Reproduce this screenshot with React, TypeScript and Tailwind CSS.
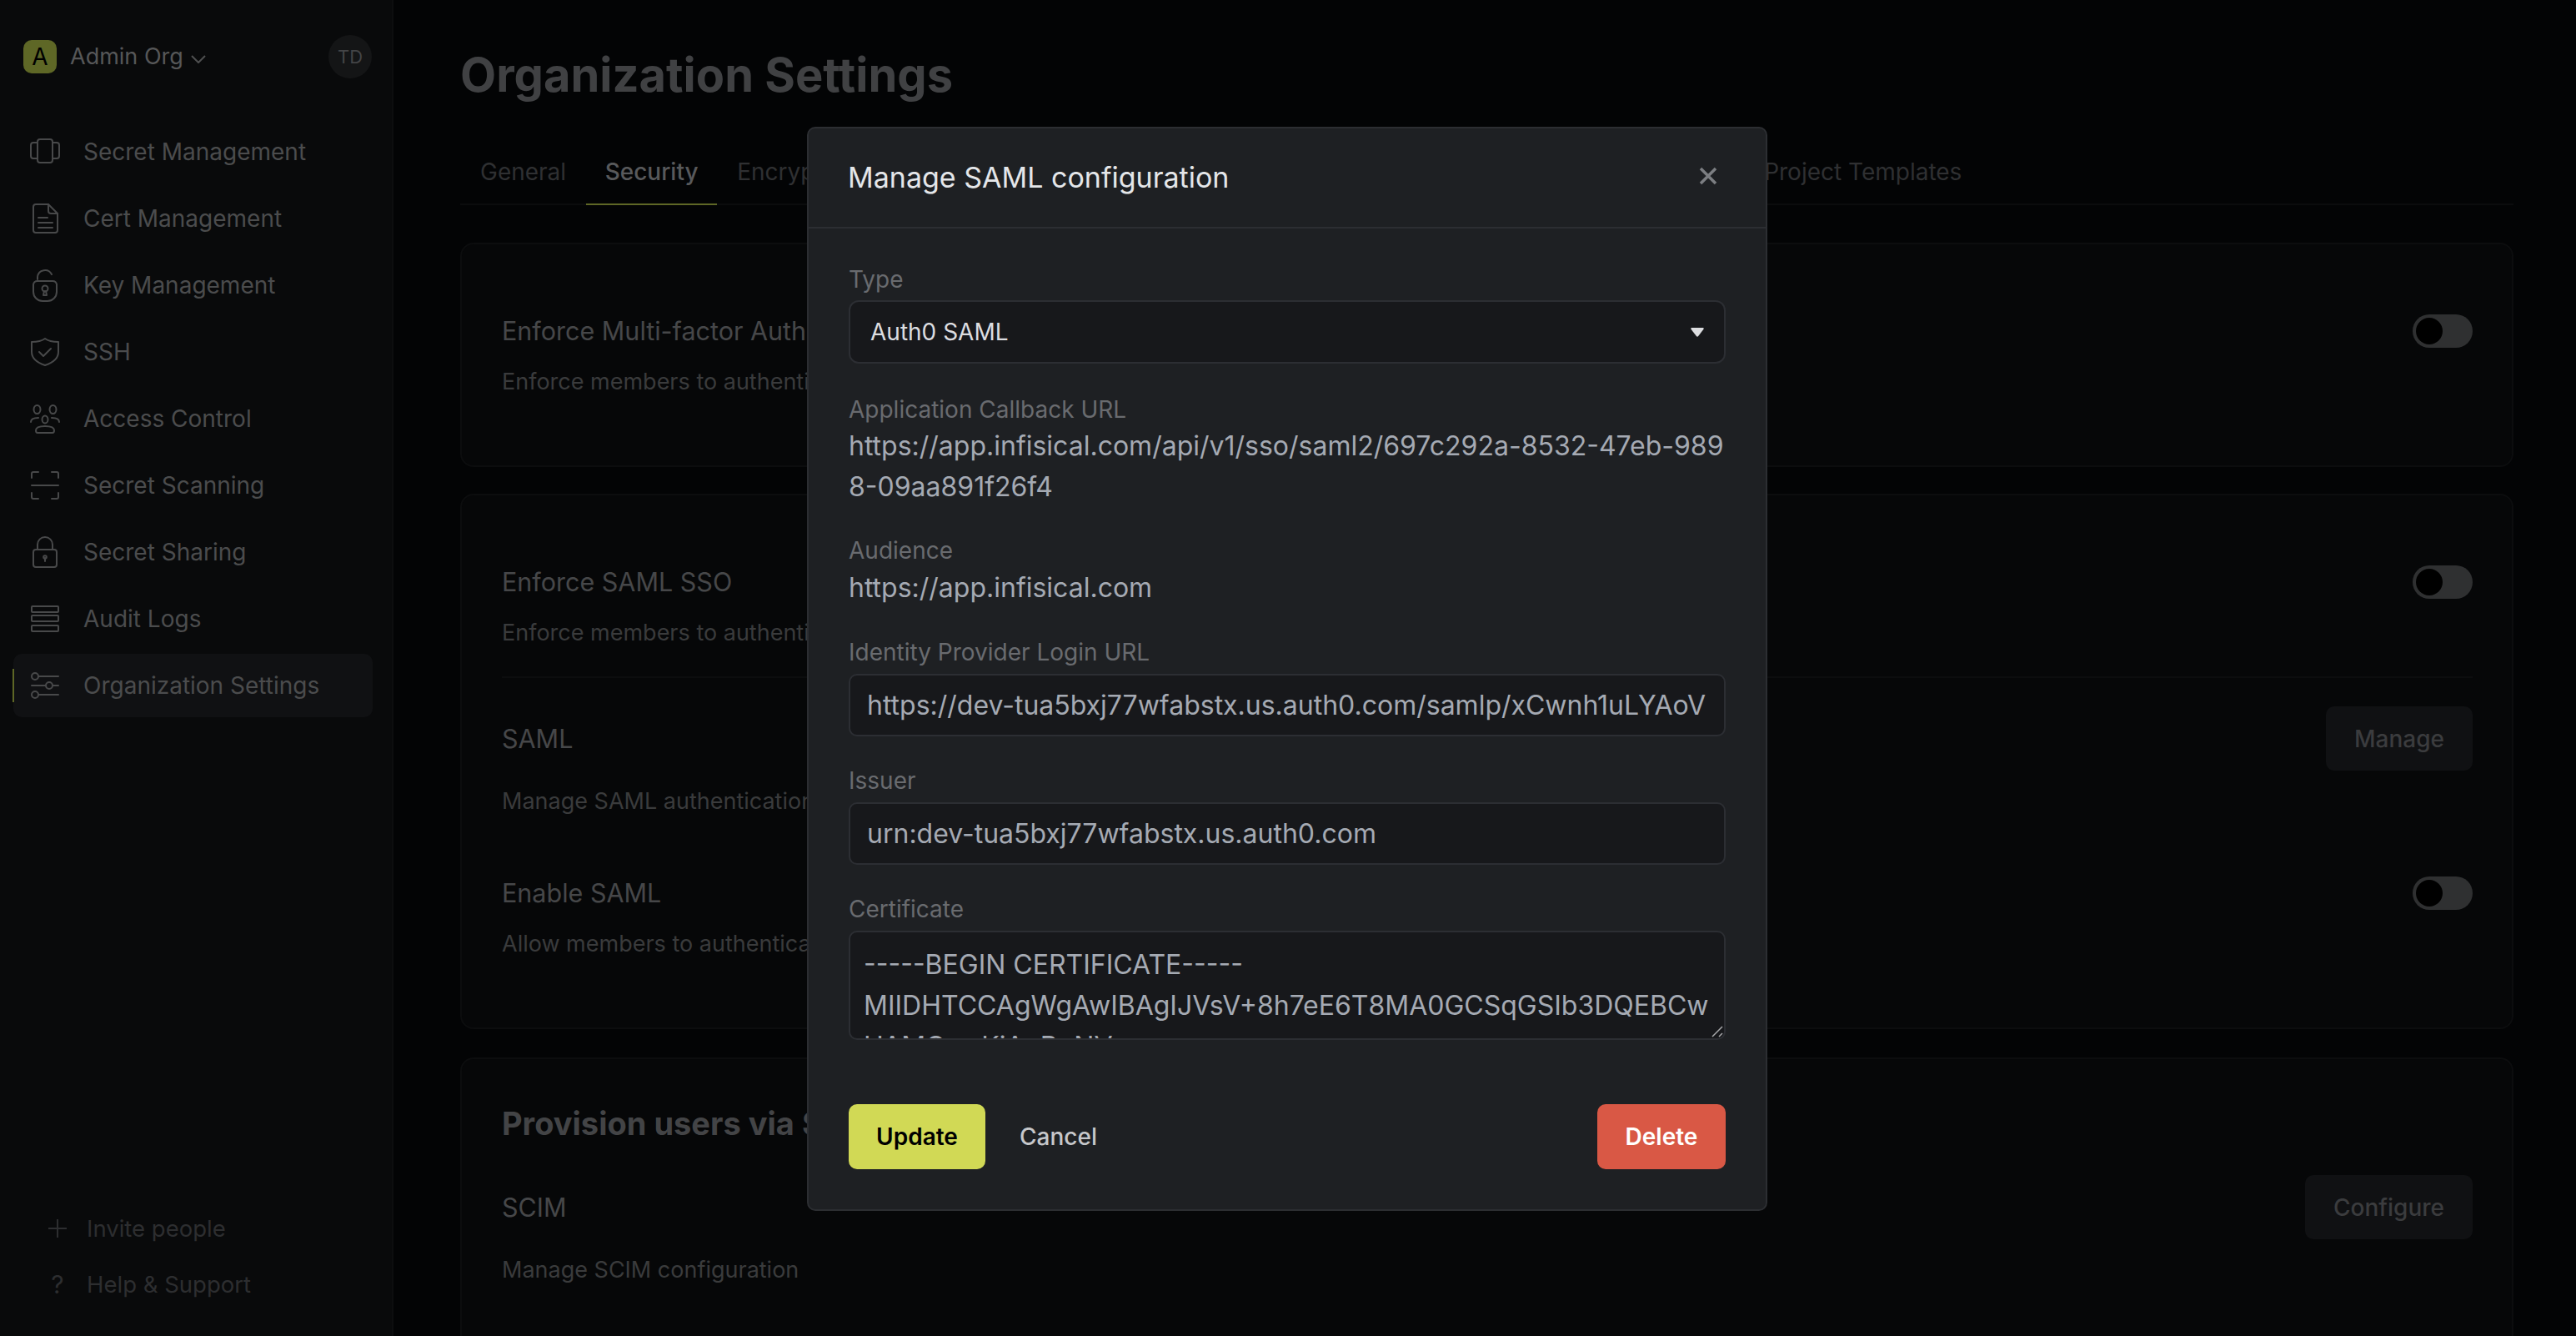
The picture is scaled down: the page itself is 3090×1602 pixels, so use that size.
import { ReactNode } from "react";

const iconClass = "h-[36px] w-[36px] shrink-0 fill-none stroke-[#48494a] stroke-2";

const navItems: { label: string; icon: ReactNode; active?: boolean }[] = [
  {
    label: "Secret Management",
    icon: (
      <svg viewBox="0 0 36 36" className={iconClass} strokeLinejoin="round">
        <rect x="9" y="3" width="18" height="28" rx="3" />
        <path d="M9 7H4a3 3 0 0 0-3 3v13a3 3 0 0 0 3 3h5M27 7h5a3 3 0 0 1 3 3v13a3 3 0 0 1-3 3h-5" />
      </svg>
    ),
  },
  {
    label: "Cert Management",
    icon: (
      <svg viewBox="0 0 36 36" className={iconClass} strokeLinejoin="round" strokeLinecap="round">
        <path d="M7 1h15l11 11v20a3 3 0 0 1-3 3H7a3 3 0 0 1-3-3V4a3 3 0 0 1 3-3z" />
        <path d="M22 1v8a3 3 0 0 0 3 3h8M10 17h11M10 23h17M10 29h17" />
      </svg>
    ),
  },
  {
    label: "Key Management",
    icon: (
      <svg viewBox="0 0 36 40" className={iconClass + " h-[40px]"} strokeLinejoin="round" strokeLinecap="round">
        <path d="M9 13V10a9 9 0 0 1 17-3" />
        <path d="M4 19a5 5 0 0 1 5-4h18a5 5 0 0 1 5 4v9a11 11 0 0 1-11 11h-6A11 11 0 0 1 4 28z" />
        <circle cx="18" cy="24" r="3.5" />
        <path d="M17 27l-1 5h4l-1-5" />
      </svg>
    ),
  },
  {
    label: "SSH",
    icon: (
      <svg viewBox="0 0 36 36" className={iconClass} strokeLinejoin="round" strokeLinecap="round">
        <path d="M18 2c4 3 10 4 16 4v12c0 8-7 13-16 16C9 31 2 26 2 18V6c6 0 12-1 16-4z" />
        <path d="M11 18l5 5 9-9" />
      </svg>
    ),
  },
  {
    label: "Access Control",
    icon: (
      <svg viewBox="0 0 36 36" className={iconClass} strokeLinejoin="round" strokeLinecap="round">
        <ellipse cx="8.5" cy="7" rx="4" ry="5" />
        <ellipse cx="27.5" cy="7" rx="4" ry="5" />
        <ellipse cx="18" cy="19" rx="3.5" ry="4.5" />
        <path d="M1 22c0-3 3-5 9-5M35 22c0-3-3-5-9-5" />
        <path d="M7 32c0-3 4-5 11-5s11 2 11 5c0 2-1 3-2 3H9c-1 0-2-1-2-3z" />
      </svg>
    ),
  },
  {
    label: "Secret Scanning",
    icon: (
      <svg viewBox="0 0 36 36" className={iconClass} strokeLinejoin="round" strokeLinecap="round">
        <path d="M2 9V4a2 2 0 0 1 2-2h6M26 2h6a2 2 0 0 1 2 2v5M2 27v5a2 2 0 0 0 2 2h6M26 34h6a2 2 0 0 0 2-2v-5M2 18h32" />
      </svg>
    ),
  },
  {
    label: "Secret Sharing",
    icon: (
      <svg viewBox="0 0 36 40" className={iconClass + " h-[40px]"} strokeLinejoin="round" strokeLinecap="round">
        <path d="M9 17V11a9 9 0 0 1 18 0v6" />
        <rect x="4" y="17" width="28" height="21" rx="3" />
        <circle cx="18" cy="26" r="1.8" />
        <path d="M18 27v4" />
      </svg>
    ),
  },
  {
    label: "Audit Logs",
    icon: (
      <svg viewBox="0 0 36 36" className={iconClass} strokeLinejoin="round">
        <rect x="2" y="3" width="32" height="7" rx="1" />
        <rect x="2" y="14" width="32" height="7" rx="1" />
        <rect x="2" y="26" width="32" height="7" rx="1" />
      </svg>
    ),
  },
  {
    label: "Organization Settings",
    active: true,
    icon: (
      <svg viewBox="0 0 36 36" className={iconClass} strokeLinecap="round">
        <circle cx="6" cy="7" r="4" />
        <circle cx="23" cy="18" r="4" />
        <circle cx="6" cy="29" r="4" />
        <path d="M10 7h24M2 18h17M27 18h7M10 29h24" />
      </svg>
    ),
  },
];

function Toggle() {
  return (
    <div className="flex h-[40px] w-[72px] items-center rounded-full bg-[#2f3031] pl-[4px]">
      <div className="h-[32px] w-[32px] rounded-full bg-black" />
    </div>
  );
}

function Title({ children }: { children: ReactNode }) {
  return <div className="text-[30.5px] leading-[48px] text-[#464749]">{children}</div>;
}

function Desc({ children }: { children: ReactNode }) {
  return <div className="mt-[17px] whitespace-nowrap text-[27px] leading-[40px] text-[#3a3b3c]">{children}</div>;
}

function Label({ children }: { children: ReactNode }) {
  return <div className="text-[28px] leading-[40px] text-[#696b6f]">{children}</div>;
}

function TextInput({ value }: { value: string }) {
  return (
    <input
      readOnly
      value={value}
      className="mt-[6px] h-[75px] w-full rounded-[10px] border-2 border-[#2c2e33] bg-[#17181b] px-[20px] text-[32px] text-[#a5aab3] outline-none"
    />
  );
}

export default function App() {
  return (
    <div className="relative flex h-[1602px] w-[3090px] overflow-hidden bg-[#030405] font-['Inter',sans-serif]">
      {/* sidebar */}
      <aside className="flex w-[472px] shrink-0 flex-col border-r-2 border-[#0d0e0f] bg-[#090a0b] pl-[16px] pr-[23px]">
        <div className="flex h-[144px] items-start pl-[12px] pr-[1px] pt-[42px]">
          <div className="mt-[6px] flex h-[40px] w-[40px] items-center justify-center rounded-[10px] bg-[#5e6726] text-[28px] leading-none text-black">
            A
          </div>
          <span className="ml-[16px] mt-[6px] text-[27px] leading-[40px] text-[#565758]">Admin Org</span>
          <svg viewBox="0 0 18 10" className="ml-[9px] mt-[24px] h-[10px] w-[18px] fill-none stroke-[#4f5051] stroke-2">
            <path d="M1 1l8 8 8-8" />
          </svg>
          <div className="ml-auto flex h-[52px] w-[52px] items-center justify-center rounded-full bg-[#141516] text-[22px] text-[#434446]">
            TD
          </div>
        </div>
        <nav className="flex flex-col gap-[4px]">
          {navItems.map((item) => (
            <div
              key={item.label}
              className={
                item.active
                  ? "relative flex h-[76px] items-center gap-[28px] rounded-[10px] bg-[#101113] pl-[20px]"
                  : "flex h-[76px] items-center gap-[28px] pl-[20px]"
              }
            >
              {item.active && <div className="absolute left-[-1px] h-[40px] w-[2px] bg-[#5e6726]" />}
              {item.icon}
              <span className="text-[28px] text-[#4b4c4d]">{item.label}</span>
            </div>
          ))}
        </nav>
        <div className="mt-auto flex flex-col gap-[27px] pb-[42px] pl-[41px] text-[27.5px] leading-[40px] text-[#2d2e30]">
          <div className="flex items-center">
            <svg viewBox="0 0 24 24" className="h-[24px] w-[24px] fill-none stroke-[#2d2e30] stroke-2">
              <path d="M12 1v22M1 12h22" />
            </svg>
            <span className="ml-[23px]">Invite people</span>
          </div>
          <div className="flex items-center">
            <span className="w-[24px] text-center text-[30px]">?</span>
            <span className="ml-[23px]">Help &amp; Support</span>
          </div>
        </div>
      </aside>

      {/* page behind the modal */}
      <main className="min-w-0 flex-1 pl-[80px] pr-[75px] pt-[54px]">
        <h1 className="text-[56px] font-bold leading-[72px] text-[#404143]">Organization Settings</h1>
        <div className="mt-[40px] flex h-[80px] border-b-2 border-[#0b0c0d] pt-[1px] text-[28px] text-[#2f3032]">
          <div className="flex items-center px-[24px]">General</div>
          <div className="relative flex w-[157px] items-center justify-center font-medium text-[#58595b]">
            Security
            <div className="absolute inset-x-0 bottom-[-2px] h-[2px] bg-[#5e6726]" />
          </div>
          <div className="flex items-center px-[24px]">Encryption</div>
          <div className="flex items-center px-[24px]">Workflow Integrations</div>
          <div className="flex items-center px-[24px]">Audit Log Streams</div>
          <div className="flex items-center px-[24px]">External Migrations</div>
          <div className="flex items-center px-[24px]">KMIP</div>
          <div className="ml-[-9px] flex items-center whitespace-nowrap px-[24px]">Project Templates</div>
        </div>

        <section className="mt-[45px] rounded-[16px] border-2 border-[#0c0d0e] bg-[#060708] pb-[48px] pl-[48px] pr-[47px] pt-[48px]">
          <div className="flex items-center justify-between pt-[32px]">
            <Title>Enforce Multi-factor Authentication</Title>
            <Toggle />
          </div>
          <Desc>Enforce members to authenticate with MFA to access this organization</Desc>
          <div className="h-[32px]" />
        </section>

        <section className="mt-[32px] rounded-[16px] border-2 border-[#0c0d0e] bg-[#060708] pl-[48px] pr-[47px] pt-[48px]">
          <div className="flex items-center justify-between pt-[32px]">
            <Title>Enforce SAML SSO</Title>
            <Toggle />
          </div>
          <Desc>Enforce members to authenticate via SAML to access this organization</Desc>
          <div className="mt-[32px] h-[2px] bg-[#0c0d0e]" />
          <div className="mt-[34px] flex items-center justify-between">
            <Title>SAML</Title>
            <div className="flex h-[77px] w-[176px] items-center justify-center rounded-[10px] bg-[#101113] text-[28px] font-medium text-[#3b3c3e]">
              Manage
            </div>
          </div>
          <Desc>Manage SAML authentication configuration</Desc>
          <div className="mt-[66px] flex items-center justify-between">
            <Title>Enable SAML</Title>
            <Toggle />
          </div>
          <Desc>Allow members to authenticate into Infisical with SAML</Desc>
          <div className="h-[80px]" />
        </section>

        <section className="mt-[34px] rounded-[16px] border-2 border-[#0c0d0e] bg-[#060708] pb-[200px] pl-[48px] pr-[47px] pt-[48px]">
          <div className="mt-[-1px] text-[38px] font-bold leading-[60px] text-[#434446]">Provision users via SCIM</div>
          <div className="mt-[32px] flex items-center justify-between">
            <Title>SCIM</Title>
            <div className="flex h-[77px] w-[201px] items-center justify-center rounded-[10px] bg-[#101113] text-[28px] font-medium text-[#3b3c3e]">
              Configure
            </div>
          </div>
          <Desc>Manage SCIM configuration</Desc>
        </section>
      </main>

      {/* modal */}
      <div className="absolute inset-0 flex items-start justify-center pr-[2px] pt-[152px]">
        <div className="w-[1152px] rounded-[10px] border-2 border-[#2c2e32] bg-[#1e2023]">
          <div className="flex h-[120px] items-center justify-between border-b-2 border-[#2c2e32] pb-[2px] pl-[47px] pr-[58px]">
            <h2 className="text-[34px] text-[#e4e6e9]">Manage SAML configuration</h2>
            <svg viewBox="0 0 22 22" className="mt-[-2px] h-[22px] w-[22px] fill-none stroke-[#7c7e82] stroke-[3.5]">
              <path d="M2 2l18 18M20 2L2 20" />
            </svg>
          </div>
          <div className="px-[48px] pb-[48px] pt-[41px]">
            <Label>Type</Label>
            <div className="mt-[5px] flex h-[76px] items-center justify-between rounded-[12px] border-2 border-[#2c2e33] bg-[#17181b] pl-[24px] pr-[24px]">
              <span className="text-[28px] text-[#dcdde0]">Auth0 SAML</span>
              <svg viewBox="0 0 16 11" className="h-[11px] w-[16px] fill-[#dcdde0]">
                <path d="M1.5 0h13c1 0 1.6 1 1 1.8L9 10.2c-.5.6-1.5.6-2 0L.5 1.8C-.1 1 .5 0 1.5 0z" />
              </svg>
            </div>

            <div className="mt-[35px]">
              <Label>Application Callback URL</Label>
            </div>
            <div className="mt-[-1px] text-[32px] leading-[49px] text-[#a5aab3]">
              <div className="whitespace-nowrap">https://app.infisical.com/api/v1/sso/saml2/697c292a-8532-47eb-989</div>
              <div>8-09aa891f26f4</div>
            </div>

            <div className="mt-[32px]">
              <Label>Audience</Label>
            </div>
            <div className="text-[32px] leading-[50px] text-[#a5aab3]">https://app.infisical.com</div>

            <div className="mt-[32px]">
              <Label>Identity Provider Login URL</Label>
            </div>
            <TextInput value="https://dev-tua5bxj77wfabstx.us.auth0.com/samlp/xCwnh1uLYAoVmWRvFmQwZt5QnTn3nGqP" />

            <div className="mt-[33px]">
              <Label>Issuer</Label>
            </div>
            <TextInput value="urn:dev-tua5bxj77wfabstx.us.auth0.com" />

            <div className="mt-[33px]">
              <Label>Certificate</Label>
            </div>
            <div className="relative mt-[6px]">
              <textarea
                readOnly
                wrap="off"
                defaultValue={
                  "-----BEGIN CERTIFICATE-----\nMIIDHTCCAgWgAwIBAgIJVsV+8h7eE6T8MA0GCSqGSIb3DQEBCw\nUAMCwxKjAoBgNV\nBAMTIWRldi10dWE1Ynhq"
                }
                className="block h-[131px] w-full resize-none overflow-hidden rounded-[10px] border-2 border-[#2c2e33] bg-[#17181b] px-[16px] pt-[14px] text-[32px] leading-[49px] text-[#a5aab3] outline-none [scrollbar-width:none]"
              />
              <svg viewBox="0 0 14 14" className="absolute bottom-[3px] right-[3px] h-[14px] w-[14px] fill-none stroke-[#a8a9ab] stroke-[1.5]">
                <path d="M1 13L13 1M9 13l4-4" />
              </svg>
            </div>

            <div className="mt-[77px] flex items-center">
              <div className="flex h-[78px] w-[164px] items-center justify-center rounded-[10px] bg-[#d1d955] text-[28px] font-semibold text-black">
                Update
              </div>
              <div className="ml-[41px] text-[28px] font-medium text-[#c6c7ca]">Cancel</div>
              <div className="ml-auto flex h-[78px] w-[154px] items-center justify-center rounded-[10px] bg-[#d95845] text-[28px] font-semibold text-white">
                Delete
              </div>
            </div>
          </div>
        </div>
      </div>
    </div>
  );
}
